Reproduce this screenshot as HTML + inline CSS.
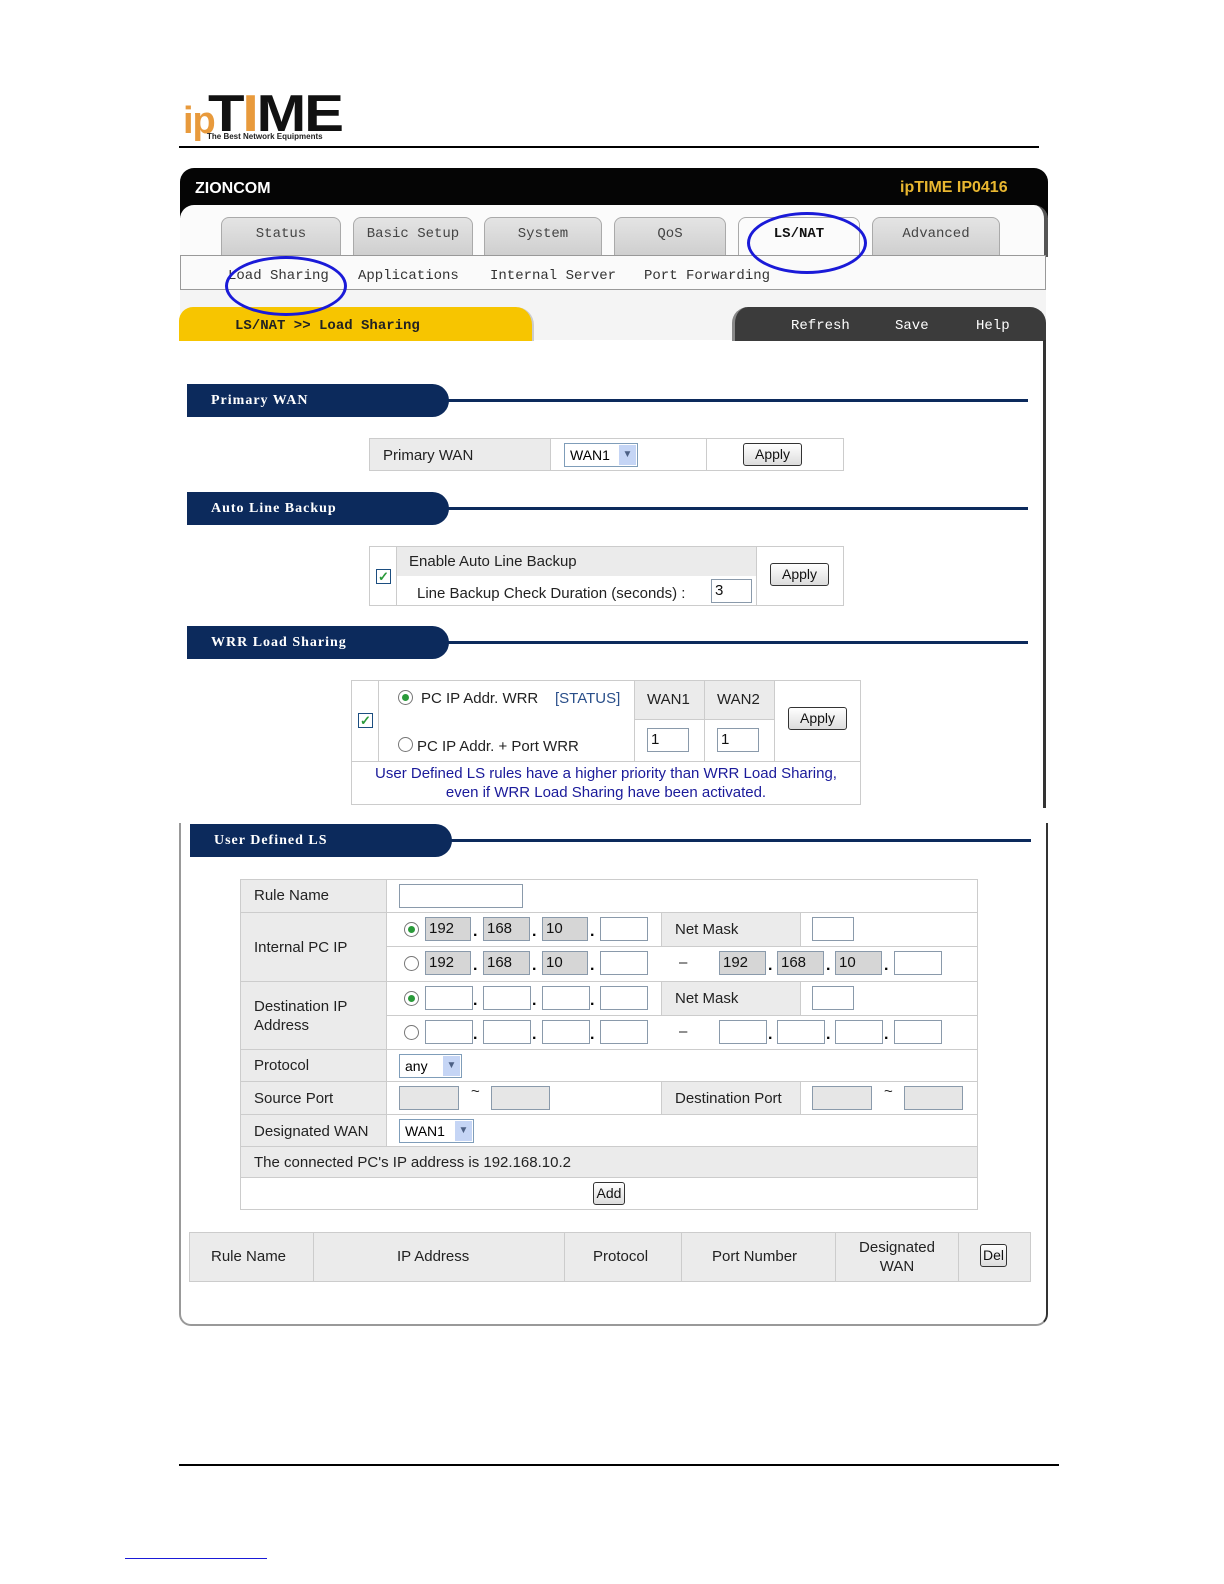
<!DOCTYPE html>
<html><head><meta charset="utf-8"><style>
*{margin:0;padding:0;box-sizing:border-box}
body{width:1224px;height:1584px;background:#fff;position:relative;font-family:"Liberation Sans",Arial,sans-serif;overflow:hidden}
.a{position:absolute}
.mono{font-family:"Liberation Mono",monospace}
.tab{position:absolute;top:217px;height:38px;background:linear-gradient(#e4e4e4,#cfcfcf);border:1px solid #aaa;border-bottom:none;border-radius:8px 8px 0 0;font-family:"Liberation Mono",monospace;font-size:14px;color:#444;text-align:center;line-height:32px}
.sub{position:absolute;top:268px;font-family:"Liberation Mono",monospace;font-size:14px;color:#333}
.sh{position:absolute;left:187px;width:262px;height:33px;background:#0c2a5c;border-radius:0 18px 18px 0;color:#fff;font-family:"Liberation Serif",serif;font-weight:bold;font-size:14px;line-height:33px;padding-left:24px;letter-spacing:1px}
.sl{position:absolute;left:440px;width:588px;height:3px;background:#0c2a5c}
.c{position:absolute;border:1px solid #ccc;font-size:15px;color:#222}
.g{background:#ebebeb}
.i{position:absolute;height:24px;border:1px solid #8a9aab;background:#fff;font-size:15px;line-height:22px;padding-left:3px;color:#111}
.ig{background:#d6d6d6}
.btn{position:absolute;height:23px;border:1px solid #333;border-radius:3px;background:linear-gradient(#fff,#dcdcdc);font-size:14px;text-align:center;line-height:21px;color:#111}
.r{position:absolute;width:15px;height:15px;border:1px solid #777;border-radius:50%;background:#fff}
.r.on::after{content:"";position:absolute;left:3px;top:3px;width:7px;height:7px;border-radius:50%;background:#2a9a3a}
.cb{position:absolute;width:15px;height:15px;border:1px solid #1c4e80;background:#fff;color:#2a9a3a;font-size:13px;line-height:13px;text-align:center;font-weight:bold}
.dot{position:absolute;font-size:16px;font-weight:bold}
.sel{position:absolute;height:24px;border:1px solid #7f9db9;background:#fff;font-size:14px;line-height:22px;padding-left:5px}
.sel b{position:absolute;right:1px;top:1px;width:17px;height:20px;background:#c5d5f5;color:#4d6185;font-size:10px;text-align:center;line-height:20px}
.t{position:absolute;font-size:15px;color:#222}
</style></head><body>

<!-- logo -->
<div class="a" style="left:183px;top:100px;font-size:38px;font-weight:bold;color:#e89a3c;letter-spacing:-1px">ip</div>
<div class="a" style="left:208px;top:88px;font-size:52px;font-weight:900;color:#111;letter-spacing:-2px;transform:scaleX(1.15);transform-origin:left top;line-height:52px">T<span style="color:#e89a3c">I</span>ME</div>
<div class="a" style="left:207px;top:132px;font-size:8px;color:#222;font-weight:bold">The Best Network Equipments</div>
<div class="a" style="left:179px;top:146px;width:860px;height:2px;background:#000"></div>

<!-- header bar -->
<div class="a" style="left:180px;top:168px;width:868px;height:50px;background:#050505;border-radius:14px 14px 0 0"></div>
<div class="a" style="left:195px;top:180px;color:#fff;font-weight:bold;font-size:16px">ZIONCOM</div>
<div class="a" style="left:900px;top:179px;color:#e9b730;font-weight:bold;font-size:16px">ipTIME IP0416</div>
<div class="a" style="left:180px;top:205px;width:868px;height:52px;background:#fbfbfb;border-radius:14px 14px 0 0;border-right:4px solid #555"></div>

<div class="tab" style="left:221px;width:120px">Status</div>
<div class="tab" style="left:353px;width:120px">Basic Setup</div>
<div class="tab" style="left:484px;width:118px">System</div>
<div class="tab" style="left:614px;width:112px">QoS</div>
<div class="tab" style="left:738px;width:122px;background:#fbfbfb;color:#111;font-weight:bold">LS/NAT</div>
<div class="tab" style="left:872px;width:128px">Advanced</div>

<!-- sub bar -->
<div class="a" style="left:180px;top:255px;width:866px;height:35px;background:#fafafa;border:1px solid #999"></div>
<div class="sub" style="left:228px">Load Sharing</div>
<div class="sub" style="left:358px">Applications</div>
<div class="sub" style="left:490px">Internal Server</div>
<div class="sub" style="left:644px">Port Forwarding</div>
<div class="a" style="left:180px;top:290px;width:866px;height:50px;background:#f4f4f4"></div>

<!-- yellow tab -->
<div class="a" style="left:179px;top:307px;width:355px;height:34px;background:#f7c500;border-radius:14px 18px 0 0;border-right:2px solid #ccc"></div>
<div class="a mono" style="left:235px;top:318px;font-size:14px;font-weight:bold;color:#222">LS/NAT &gt;&gt; Load Sharing</div>
<div class="a" style="left:732px;top:307px;width:314px;height:34px;background:#3b3b3b;border-radius:16px 16px 0 0;border-left:3px solid #888"></div>
<div class="a mono" style="left:791px;top:318px;color:#fff;font-size:14px">Refresh</div>
<div class="a mono" style="left:895px;top:318px;color:#fff;font-size:14px">Save</div>
<div class="a mono" style="left:976px;top:318px;color:#fff;font-size:14px">Help</div>
<div class="a" style="left:1043px;top:340px;width:3px;height:468px;background:#333"></div>

<!-- circles -->
<div class="a" style="left:747px;top:212px;width:120px;height:62px;border:3px solid #1a1ad8;border-radius:50%"></div>
<div class="a" style="left:225px;top:256px;width:122px;height:60px;border:3px solid #1a1ad8;border-radius:50%"></div>

<!-- Primary WAN -->
<div class="sh" style="top:384px">Primary WAN</div><div class="sl" style="top:399px"></div>
<div class="c g" style="left:369px;top:438px;width:182px;height:33px;line-height:33px;padding-left:13px">Primary WAN</div>
<div class="c" style="left:550px;top:438px;width:157px;height:33px"></div>
<div class="c" style="left:706px;top:438px;width:138px;height:33px"></div>
<div class="sel" style="left:564px;top:443px;width:74px">WAN1<b>▼</b></div>
<div class="btn" style="left:743px;top:443px;width:59px">Apply</div>

<!-- Auto line backup -->
<div class="sh" style="top:492px">Auto Line Backup</div><div class="sl" style="top:507px"></div>
<div class="c" style="left:369px;top:546px;width:475px;height:60px"></div>
<div class="a" style="left:396px;top:546px;width:1px;height:60px;background:#ccc"></div>
<div class="a" style="left:756px;top:546px;width:1px;height:60px;background:#ccc"></div>
<div class="a g" style="left:397px;top:547px;width:359px;height:29px"></div>
<div class="cb" style="left:376px;top:569px">✓</div>
<div class="t" style="left:409px;top:553px">Enable Auto Line Backup</div>
<div class="t" style="left:417px;top:585px">Line Backup Check Duration (seconds) :</div>
<div class="i" style="left:711px;top:579px;width:41px">3</div>
<div class="btn" style="left:770px;top:563px;width:59px">Apply</div>

<!-- WRR -->
<div class="sh" style="top:626px">WRR Load Sharing</div><div class="sl" style="top:641px"></div>
<div class="c" style="left:351px;top:680px;width:510px;height:125px"></div>
<div class="a" style="left:378px;top:680px;width:1px;height:81px;background:#ccc"></div>
<div class="a" style="left:351px;top:761px;width:510px;height:1px;background:#ccc"></div>
<div class="a g" style="left:634px;top:681px;width:140px;height:38px"></div>
<div class="a" style="left:634px;top:680px;width:1px;height:81px;background:#ccc"></div>
<div class="a" style="left:704px;top:680px;width:1px;height:81px;background:#ccc"></div>
<div class="a" style="left:774px;top:680px;width:1px;height:81px;background:#ccc"></div>
<div class="a" style="left:634px;top:719px;width:140px;height:1px;background:#ccc"></div>
<div class="cb" style="left:358px;top:713px">✓</div>
<div class="r on" style="left:398px;top:690px"></div>
<div class="t" style="left:421px;top:690px">PC IP Addr. WRR</div>
<div class="t" style="left:555px;top:690px;color:#2a4f8a">[STATUS]</div>
<div class="r" style="left:398px;top:737px"></div>
<div class="t" style="left:417px;top:738px">PC IP Addr. + Port WRR</div>
<div class="t" style="left:647px;top:691px">WAN1</div>
<div class="t" style="left:717px;top:691px">WAN2</div>
<div class="i" style="left:647px;top:728px;width:42px">1</div>
<div class="i" style="left:717px;top:728px;width:42px">1</div>
<div class="btn" style="left:788px;top:707px;width:59px">Apply</div>
<div class="t" style="left:352px;top:764px;width:508px;text-align:center;color:#1a1a9a;line-height:19px">User Defined LS rules have a higher priority than WRR Load Sharing,<br>even if WRR Load Sharing have been activated.</div>

<!-- second frame -->
<div class="a" style="left:179px;top:823px;width:869px;height:503px;border:2px solid #999;border-top:none;border-radius:0 0 12px 12px;border-right-color:#333"></div>
<div class="sh" style="left:190px;top:824px">User Defined LS</div><div class="sl" style="left:443px;top:839px"></div>

<!-- user defined table -->
<div class="c" style="left:240px;top:879px;width:738px;height:331px"></div>
<div class="a g" style="left:241px;top:880px;width:145px;height:266px"></div>
<div class="a g" style="left:241px;top:1147px;width:736px;height:30px"></div>
<div class="a g" style="left:661px;top:913px;width:139px;height:33px"></div>
<div class="a g" style="left:661px;top:982px;width:139px;height:33px"></div>
<div class="a g" style="left:661px;top:1082px;width:139px;height:32px"></div>
<div class="a" style="left:386px;top:879px;width:1px;height:267px;background:#ccc"></div>
<div class="a" style="left:240px;top:912px;width:738px;height:1px;background:#ccc"></div>
<div class="a" style="left:386px;top:946px;width:592px;height:1px;background:#ccc"></div>
<div class="a" style="left:240px;top:981px;width:738px;height:1px;background:#ccc"></div>
<div class="a" style="left:386px;top:1015px;width:592px;height:1px;background:#ccc"></div>
<div class="a" style="left:240px;top:1049px;width:738px;height:1px;background:#ccc"></div>
<div class="a" style="left:240px;top:1081px;width:738px;height:1px;background:#ccc"></div>
<div class="a" style="left:240px;top:1114px;width:738px;height:1px;background:#ccc"></div>
<div class="a" style="left:240px;top:1146px;width:738px;height:1px;background:#ccc"></div>
<div class="a" style="left:240px;top:1177px;width:738px;height:1px;background:#ccc"></div>
<div class="a" style="left:661px;top:912px;width:1px;height:34px;background:#ccc"></div>
<div class="a" style="left:800px;top:912px;width:1px;height:34px;background:#ccc"></div>
<div class="a" style="left:661px;top:981px;width:1px;height:34px;background:#ccc"></div>
<div class="a" style="left:800px;top:981px;width:1px;height:34px;background:#ccc"></div>
<div class="a" style="left:661px;top:1081px;width:1px;height:33px;background:#ccc"></div>
<div class="a" style="left:800px;top:1081px;width:1px;height:33px;background:#ccc"></div>

<div class="t" style="left:254px;top:887px">Rule Name</div>
<div class="i" style="left:399px;top:884px;width:124px"></div>
<div class="t" style="left:254px;top:939px">Internal PC IP</div>
<div class="t" style="left:254px;top:997px;line-height:19px">Destination IP<br>Address</div>
<div class="t" style="left:254px;top:1057px">Protocol</div>
<div class="t" style="left:254px;top:1090px">Source Port</div>
<div class="t" style="left:254px;top:1123px">Designated WAN</div>
<div class="t" style="left:254px;top:1154px">The connected PC's IP address is 192.168.10.2</div>
<div class="t" style="left:675px;top:921px">Net Mask</div>
<div class="t" style="left:675px;top:990px">Net Mask</div>
<div class="t" style="left:675px;top:1090px">Destination Port</div>

<div class="r on" style="left:404px;top:922px"></div>
<div class="i ig" style="left:425px;top:917px;width:46px">192</div><div class="dot" style="left:473px;top:923px">.</div>
<div class="i ig" style="left:483px;top:917px;width:47px">168</div><div class="dot" style="left:532px;top:923px">.</div>
<div class="i ig" style="left:542px;top:917px;width:46px">10</div><div class="dot" style="left:590px;top:923px">.</div>
<div class="i" style="left:600px;top:917px;width:48px"></div>
<div class="i" style="left:812px;top:917px;width:42px"></div>

<div class="r" style="left:404px;top:956px"></div>
<div class="i ig" style="left:425px;top:951px;width:46px">192</div><div class="dot" style="left:473px;top:957px">.</div>
<div class="i ig" style="left:483px;top:951px;width:47px">168</div><div class="dot" style="left:532px;top:957px">.</div>
<div class="i ig" style="left:542px;top:951px;width:46px">10</div><div class="dot" style="left:590px;top:957px">.</div>
<div class="i" style="left:600px;top:951px;width:48px"></div>
<div class="t" style="left:679px;top:954px">–</div>
<div class="i ig" style="left:719px;top:951px;width:47px">192</div><div class="dot" style="left:768px;top:957px">.</div>
<div class="i ig" style="left:777px;top:951px;width:47px">168</div><div class="dot" style="left:826px;top:957px">.</div>
<div class="i ig" style="left:835px;top:951px;width:47px">10</div><div class="dot" style="left:884px;top:957px">.</div>
<div class="i" style="left:894px;top:951px;width:48px"></div>

<div class="r on" style="left:404px;top:991px"></div>
<div class="i" style="left:425px;top:986px;width:48px"></div><div class="dot" style="left:473px;top:992px">.</div>
<div class="i" style="left:483px;top:986px;width:48px"></div><div class="dot" style="left:532px;top:992px">.</div>
<div class="i" style="left:542px;top:986px;width:48px"></div><div class="dot" style="left:590px;top:992px">.</div>
<div class="i" style="left:600px;top:986px;width:48px"></div>
<div class="i" style="left:812px;top:986px;width:42px"></div>

<div class="r" style="left:404px;top:1025px"></div>
<div class="i" style="left:425px;top:1020px;width:48px"></div><div class="dot" style="left:473px;top:1026px">.</div>
<div class="i" style="left:483px;top:1020px;width:48px"></div><div class="dot" style="left:532px;top:1026px">.</div>
<div class="i" style="left:542px;top:1020px;width:48px"></div><div class="dot" style="left:590px;top:1026px">.</div>
<div class="i" style="left:600px;top:1020px;width:48px"></div>
<div class="t" style="left:679px;top:1023px">–</div>
<div class="i" style="left:719px;top:1020px;width:48px"></div><div class="dot" style="left:768px;top:1026px">.</div>
<div class="i" style="left:777px;top:1020px;width:48px"></div><div class="dot" style="left:826px;top:1026px">.</div>
<div class="i" style="left:835px;top:1020px;width:48px"></div><div class="dot" style="left:884px;top:1026px">.</div>
<div class="i" style="left:894px;top:1020px;width:48px"></div>

<div class="sel" style="left:399px;top:1054px;width:63px">any<b>▼</b></div>
<div class="i ig" style="left:399px;top:1086px;width:60px;background:#e6e6e6"></div>
<div class="t" style="left:471px;top:1083px">~</div>
<div class="i ig" style="left:491px;top:1086px;width:59px;background:#e6e6e6"></div>
<div class="i ig" style="left:812px;top:1086px;width:60px;background:#e6e6e6"></div>
<div class="t" style="left:884px;top:1083px">~</div>
<div class="i ig" style="left:904px;top:1086px;width:59px;background:#e6e6e6"></div>
<div class="sel" style="left:399px;top:1119px;width:75px">WAN1<b>▼</b></div>
<div class="btn" style="left:593px;top:1182px;width:32px">Add</div>

<!-- bottom table -->
<div class="c g" style="left:189px;top:1232px;width:842px;height:50px"></div>
<div class="a" style="left:313px;top:1232px;width:1px;height:50px;background:#ccc"></div>
<div class="a" style="left:564px;top:1232px;width:1px;height:50px;background:#ccc"></div>
<div class="a" style="left:681px;top:1232px;width:1px;height:50px;background:#ccc"></div>
<div class="a" style="left:835px;top:1232px;width:1px;height:50px;background:#ccc"></div>
<div class="a" style="left:958px;top:1232px;width:1px;height:50px;background:#ccc"></div>
<div class="t" style="left:211px;top:1248px">Rule Name</div>
<div class="t" style="left:397px;top:1248px">IP Address</div>
<div class="t" style="left:593px;top:1248px">Protocol</div>
<div class="t" style="left:712px;top:1248px">Port Number</div>
<div class="t" style="left:836px;top:1238px;width:122px;text-align:center;line-height:19px">Designated<br>WAN</div>
<div class="btn" style="left:980px;top:1244px;width:27px">Del</div>

<div class="a" style="left:179px;top:1464px;width:880px;height:2px;background:#000"></div>
<div class="a" style="left:125px;top:1558px;width:142px;height:1px;background:#1a1ad8"></div>
</body></html>
